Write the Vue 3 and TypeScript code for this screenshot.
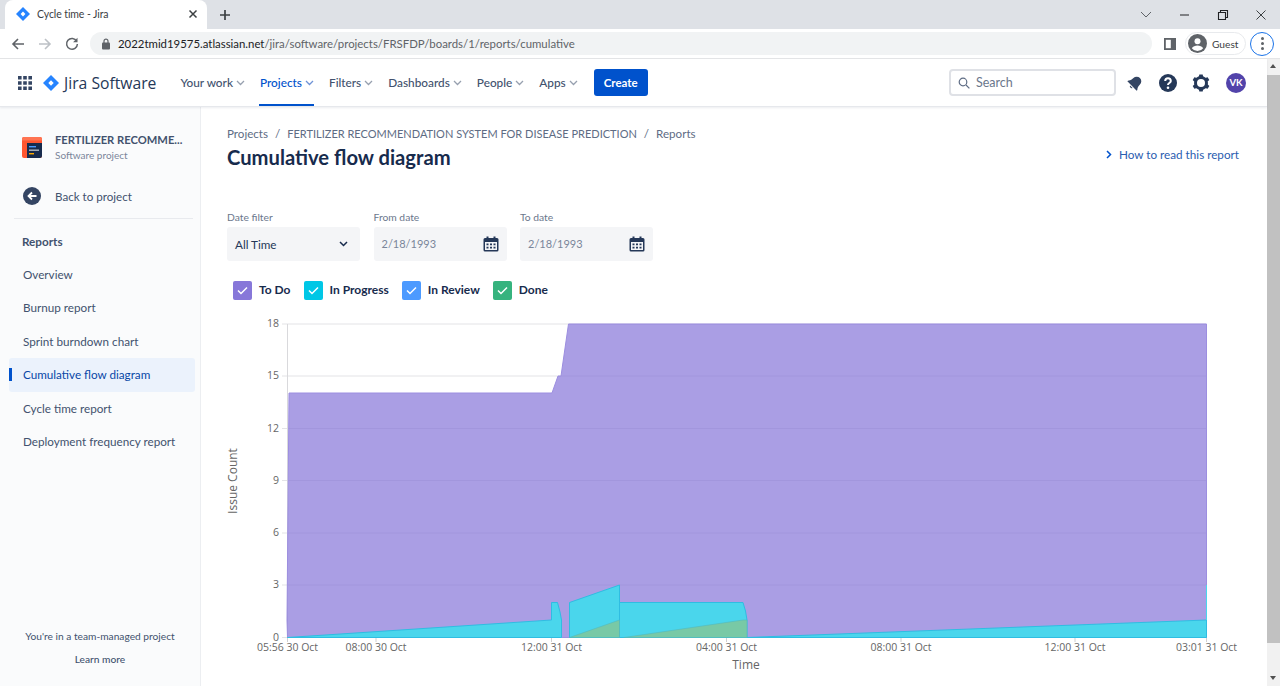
<script setup lang="ts">
const navItems = [
  { label: "Your work", active: false },
  { label: "Projects", active: true },
  { label: "Filters", active: false },
  { label: "Dashboards", active: false },
  { label: "People", active: false },
  { label: "Apps", active: false },
];

const reports = [
  { label: "Overview", active: false },
  { label: "Burnup report", active: false },
  { label: "Sprint burndown chart", active: false },
  { label: "Cumulative flow diagram", active: true },
  { label: "Cycle time report", active: false },
  { label: "Deployment frequency report", active: false },
];

const legend = [
  { label: "To Do", color: "#8777d9" },
  { label: "In Progress", color: "#00c7e6" },
  { label: "In Review", color: "#4c9aff" },
  { label: "Done", color: "#36b37e" },
];

const yTicks = [
  { label: "18", y: 324 },
  { label: "15", y: 376 },
  { label: "12", y: 428.5 },
  { label: "9", y: 480.5 },
  { label: "6", y: 533 },
  { label: "3", y: 585 },
  { label: "0", y: 637.5 },
];

const xTicks = [
  { label: "05:56 30 Oct", x: 287.5 },
  { label: "08:00 30 Oct", x: 376 },
  { label: "12:00 31 Oct", x: 551.5 },
  { label: "04:00 31 Oct", x: 726.5 },
  { label: "08:00 31 Oct", x: 901 },
  { label: "12:00 31 Oct", x: 1075 },
  { label: "03:01 31 Oct", x: 1206.5 },
];

const purpleArea =
  "287.5,637.5 287,620 289,393 552,393 558,376 561,376 568.5,324 1206.5,324 1206.5,637.5";
const cyanAreas = [
  "287.5,637.5 551.5,620 551.5,602.5 557.5,602.5 560,612 561.5,620 561.5,637.5",
  "569.5,637.5 569.5,602.5 619.5,585 619.5,637.5",
  "619.5,637.5 619.5,602.5 743,602.5 745.5,611 747,620 747,637.5",
  "747,637.5 1206.5,620 1206.5,637.5",
];
const greenAreas = [
  "569.5,637.5 619.5,620 619.5,637.5",
  "624,637.5 743,620 747,620 747,637.5",
];
</script>

<template>
  <div class="page">
    <div class="tabstrip">
      <div class="tab">
        <svg class="favicon" width="16" height="16" viewBox="0 0 16 16">
          <path d="M8 1l7 7-7 7-7-7z" fill="#2684ff" />
          <path d="M8 5.6L10.400 8 8 10.400 5.600 8z" fill="#fff" />
        </svg>
        <span class="tab-title">Cycle time - Jira</span>
        <svg class="tab-close" width="10" height="10" viewBox="0 0 10 10">
          <path d="M1.500 1.500l7 7M8.500 1.500l-7 7" stroke="#3c4043" stroke-width="1.500" />
        </svg>
      </div>
      <svg class="new-tab" width="12" height="12" viewBox="0 0 12 12">
        <path d="M6 1v10M1 6h10" stroke="#3c4043" stroke-width="1.700" />
      </svg>
      <div class="window-controls">
        <svg width="14" height="10" viewBox="0 0 14 10">
          <path d="M2 2l5 5 5-5" fill="none" stroke="#5f6368" stroke-width="1" />
        </svg>
        <svg width="12" height="10" viewBox="0 0 12 10">
          <path d="M1 5h9" stroke="#202124" stroke-width="1" />
        </svg>
        <svg width="12" height="12" viewBox="0 0 12 12">
          <path d="M1.500 3.500h7v7h-7zM3.500 3.500v-2h7v7h-2" fill="none" stroke="#202124" stroke-width="1.100" />
        </svg>
        <svg width="12" height="12" viewBox="0 0 12 12">
          <path d="M1.500 1.500l9 9M10.500 1.500l-9 9" stroke="#3c4043" stroke-width="1" />
        </svg>
      </div>
    </div>

    <div class="toolbar">
      <svg class="tool-back" width="14" height="14" viewBox="0 0 14 14">
        <path d="M13 7H2M7 2L2 7l5 5" fill="none" stroke="#5f6368" stroke-width="1.600" />
      </svg>
      <svg class="tool-forward" width="14" height="14" viewBox="0 0 14 14">
        <path d="M1 7h11M7 2l5 5-5 5" fill="none" stroke="#bdc1c6" stroke-width="1.600" />
      </svg>
      <svg class="tool-reload" width="14" height="14" viewBox="0 0 14 14">
        <path d="M11.700 4.200A5.400 5.400 0 1 0 12.400 7" fill="none" stroke="#5f6368" stroke-width="1.500" />
        <path d="M12.500 0.800v4.400H8.100z" fill="#5f6368" />
      </svg>
      <div class="address">
        <svg width="10" height="12" viewBox="0 0 10 12">
          <rect x="1" y="4.500" width="8" height="7" rx="1" fill="#5f6368" />
          <path d="M3 5V3.200a2 2 0 0 1 4 0V5" fill="none" stroke="#5f6368" stroke-width="1.200" />
        </svg>
        <span class="url"><b>2022tmid19575.atlassian.net</b>/jira/software/projects/FRSFDP/boards/1/reports/cumulative</span>
      </div>
      <svg class="side-panel" width="12" height="12" viewBox="0 0 12 12">
        <path d="M0 0h12v12H0z" fill="#5f6368" />
        <path d="M1.800 1.800h5v8.400h-5z" fill="#fff" />
      </svg>
      <div class="guest">
        <svg width="19" height="19" viewBox="0 0 19 19">
          <circle cx="9.500" cy="9.500" r="9.500" fill="#5f6368" />
          <circle cx="9.500" cy="7.300" r="3" fill="#fff" />
          <path d="M3.800 14.200c1.200-2 3.400-2.800 5.700-2.800s4.500.8 5.700 2.800a7.200 7.200 0 0 1-11.400 0z" fill="#fff" />
        </svg>
        <span>Guest</span>
      </div>
      <div class="menu-ring">
        <i></i><i></i><i></i>
      </div>
    </div>

    <div class="app-row">
      <div class="app">
        <header class="topnav">
          <svg class="apps-grid" width="14" height="14" viewBox="0 0 14 14">
            <path
              fill="#344563"
              d="M0 0h3.600v3.600H0zM5.200 0h3.600v3.600H5.200zM10.400 0H14v3.600h-3.600zM0 5.200h3.600v3.600H0zM5.200 5.200h3.600v3.600H5.200zM10.400 5.200H14v3.600h-3.600zM0 10.400h3.600V14H0zM5.200 10.400h3.600V14H5.200zM10.400 10.400H14V14h-3.600z"
            />
          </svg>
          <svg class="logo-mark" width="16" height="16" viewBox="0 0 16 16">
            <path d="M8 0l8 8-8 8-8-8z" fill="#2684ff" />
            <path d="M8 5.300L10.700 8 8 10.700 5.300 8z" fill="#fff" />
          </svg>
          <span class="logo-text">Jira Software</span>
          <nav class="nav-items">
            <div v-for="item in navItems" :key="item.label" class="nav-item" :class="{ active: item.active }">
              <span>{{ item.label }}</span>
              <svg width="9" height="6" viewBox="0 0 9 6">
                <path d="M1 1l3.500 3.500L8 1" fill="none" stroke="currentColor" stroke-width="1.300" />
              </svg>
            </div>
          </nav>
          <button class="create">Create</button>
          <div class="search">
            <svg width="12" height="12" viewBox="0 0 12 12">
              <circle cx="5" cy="5" r="3.800" fill="none" stroke="#5e6c84" stroke-width="1.200" />
              <path d="M8 8l3.400 3.400" stroke="#5e6c84" stroke-width="1.200" />
            </svg>
            <span>Search</span>
          </div>
          <svg class="top-icon bell" width="16" height="16" viewBox="0 0 16 16">
            <g transform="rotate(45 8 8)">
              <path d="M8 1a4.600 4.600 0 0 0-4.600 4.600c0 3.600-1.400 5-2 5.700v.9h13.200v-.9c-.6-.7-2-2.100-2-5.700A4.600 4.600 0 0 0 8 1z" fill="#344563" />
              <path d="M6.200 13.200a1.900 1.900 0 0 0 3.600 0z" fill="#344563" />
            </g>
          </svg>
          <svg class="top-icon help" width="18" height="18" viewBox="0 0 18 18">
            <circle cx="9" cy="9" r="9" fill="#253858" />
            <path d="M6.200 7a2.800 2.800 0 0 1 5.600 0c0 1.900-2.800 2.100-2.800 3.900" fill="none" stroke="#fff" stroke-width="2" />
            <circle cx="9" cy="13.700" r="1.300" fill="#fff" />
          </svg>
          <svg class="top-icon gear" width="18" height="18" viewBox="0 0 18 18">
            <circle cx="9" cy="9" r="5.500" fill="none" stroke="#253858" stroke-width="3" />
            <path
              d="M7.300 0.500h3.400l.5 2.600H6.800zM7.300 17.500h3.400l.5-2.600H6.800zM0.700 6.100l1.700-2.900 2.500.9-2.200 3.800zM17.300 11.900l-1.700 2.900-2.500-.9 2.200-3.800zM2.400 14.800L.7 11.900l2-1.700 2.200 3.800zM15.600 3.200l1.700 2.900-2 1.700-2.200-3.800z"
              fill="#253858"
            />
          </svg>
          <div class="avatar">VK</div>
        </header>

        <div class="content-row">
          <aside class="sidebar">
            <div class="project">
              <svg width="20" height="21" viewBox="0 0 20 21">
                <rect width="20" height="21" rx="2" fill="#ff5630" />
                <path d="M0 3.500h20V2a2 2 0 0 0-2-2H2a2 2 0 0 0-2 2z" fill="#ff7452" />
                <path d="M5 6h15v13a2 2 0 0 1-2 2H5z" fill="#172b4d" />
                <path d="M7 9h7v1.400H7z" fill="#4c9aff" />
                <path d="M7 12.500h10v1.400H7z" fill="#b3bac5" />
                <path d="M7 16h5v1.400H7z" fill="#ffab00" />
              </svg>
              <div class="project-text">
                <div class="project-name">FERTILIZER RECOMME...</div>
                <div class="project-type">Software project</div>
              </div>
            </div>
            <div class="back">
              <svg width="18" height="18" viewBox="0 0 18 18">
                <circle cx="9" cy="9" r="9" fill="#344563" />
                <path d="M13.500 9H6M9 5.500L5.500 9 9 12.500" fill="none" stroke="#fff" stroke-width="1.800" />
              </svg>
              <span>Back to project</span>
            </div>
            <div class="side-heading">Reports</div>
            <ul class="report-list">
              <li v-for="report in reports" :key="report.label" :class="{ active: report.active }">
                {{ report.label }}
              </li>
            </ul>
            <div class="side-foot">
              <div>You're in a team-managed project</div>
              <div class="learn">Learn more</div>
            </div>
          </aside>

          <main class="main">
            <div class="crumbs">
              <span>Projects</span><i>/</i><span class="crumb-caps">FERTILIZER RECOMMENDATION SYSTEM FOR DISEASE PREDICTION</span><i>/</i><span>Reports</span>
            </div>
            <div class="title-row">
              <h1>Cumulative flow diagram</h1>
              <a class="how-to">
                <svg width="6" height="9" viewBox="0 0 6 9">
                  <path d="M1 1l3.500 3.500L1 8" fill="none" stroke="#0052cc" stroke-width="1.500" />
                </svg>
                How to read this report
              </a>
            </div>

            <div class="filters">
              <div class="field">
                <label>Date filter</label>
                <div class="box select">
                  <span>All Time</span>
                  <svg width="9" height="6" viewBox="0 0 9 6">
                    <path d="M1 1l3.500 3.500L8 1" fill="none" stroke="#172b4d" stroke-width="1.500" />
                  </svg>
                </div>
              </div>
              <div v-for="name in ['From date', 'To date']" :key="name" class="field">
                <label>{{ name }}</label>
                <div class="box date">
                  <span>2/18/1993</span>
                  <svg width="16" height="16" viewBox="0 0 16 16">
                    <path
                      fill="#253858"
                      fill-rule="evenodd"
                      d="M2 2h1.500V.5h2V2h5V.5h2V2H14a1.500 1.500 0 0 1 1.500 1.500V14a1.500 1.500 0 0 1-1.500 1.500H2A1.500 1.500 0 0 1 .5 14V3.500A1.500 1.500 0 0 1 2 2zm0 4v8h12V6z"
                    />
                    <path
                      fill="#253858"
                      d="M3.500 7.500h2v1.700h-2zM7 7.500h2v1.700H7zM10.500 7.500h2v1.700h-2zM3.500 10.800h2v1.700h-2zM7 10.800h2v1.700H7zM10.500 10.800h2v1.700h-2z"
                    />
                  </svg>
                </div>
              </div>
            </div>

            <div class="legend">
              <div v-for="entry in legend" :key="entry.label" class="legend-item">
                <span class="check" :style="{ background: entry.color }">
                  <svg width="11" height="9" viewBox="0 0 11 9">
                    <path d="M1 4.500l3 3L10 1.500" fill="none" stroke="#fff" stroke-width="1.500" />
                  </svg>
                </span>
                <span class="legend-label">{{ entry.label }}</span>
              </div>
            </div>

            <svg class="chart" width="1066" height="376" viewBox="201 310 1066 376">
              <g v-for="tick in yTicks" :key="tick.label">
                <line x1="282" :y1="tick.y" x2="1206.500" :y2="tick.y" stroke="#e3e3e6" />
                <text x="279" :y="tick.y + 3" text-anchor="end" class="tick-text">{{ tick.label }}</text>
              </g>
              <line x1="287.500" y1="324" x2="287.500" y2="637.500" stroke="#d9d9dc" />
              <g v-for="tick in xTicks" :key="tick.x">
                <line :x1="tick.x" y1="637.500" :x2="tick.x" y2="642" stroke="#cfcfd2" />
                <text :x="tick.x" y="651" text-anchor="middle" class="tick-text">{{ tick.label }}</text>
              </g>
              <polygon :points="purpleArea" fill="#8777d9" fill-opacity="0.71" stroke="#9c8ee0" stroke-width="1" />
              <polygon v-for="area in cyanAreas" :key="area" :points="area" fill="#4ad6ec" stroke="#2fbde2" stroke-width="1" />
              <polygon v-for="area in greenAreas" :key="area" :points="area" fill="#78c9a6" stroke="#52b8bc" stroke-width="0.600" />
              <line x1="1206.500" y1="585" x2="1206.500" y2="620" stroke="#4ad6ec" />
              <text x="746" y="669" text-anchor="middle" class="axis-text">Time</text>
              <text x="237" y="481" text-anchor="middle" transform="rotate(-90 237 481)" class="axis-text">Issue Count</text>
            </svg>
          </main>
        </div>
      </div>

      <div class="scrollbar">
        <span class="arrow-up"></span>
        <div class="thumb"></div>
        <span class="arrow-down"></span>
      </div>
    </div>
  </div>
</template>

<style scoped>
.page {
  width: 1280px;
  height: 686px;
  overflow: hidden;
  display: flex;
  flex-direction: column;
  font-family: Lato, "Open Sans", sans-serif;
  color: #42526e;
  background: #fff;
}

.tabstrip {
  height: 29px;
  flex: none;
  display: flex;
  align-items: center;
  background: #dee1e6;
}

.tab {
  width: 202px;
  height: 29px;
  margin-left: 5px;
  padding: 0 9px 1px 12px;
  box-sizing: border-box;
  background: #fff;
  border-radius: 8px 8px 0 0;
  display: flex;
  align-items: center;
}

.favicon {
  margin-left: -2px;
}

.tab-title {
  margin-left: 6px;
  font-size: 10.500px;
  letter-spacing: -0.1px;
  color: #3c4043;
}

.tab-close {
  margin-left: auto;
}

.new-tab {
  margin-left: 12px;
}

.window-controls {
  margin-left: auto;
  width: 128px;
  margin-right: 13px;
  display: flex;
  justify-content: space-between;
  align-items: center;
}

.toolbar {
  height: 30px;
  flex: none;
  display: flex;
  align-items: center;
  background: #fff;
  border-bottom: 1px solid #e4e5e7;
  box-sizing: border-box;
}

.tool-back {
  margin-left: 11px;
}

.tool-forward {
  margin-left: 13px;
}

.tool-reload {
  margin-left: 13px;
}

.address {
  width: 1062px;
  height: 23px;
  margin-left: 11px;
  padding-left: 11px;
  box-sizing: border-box;
  background: #f1f3f4;
  border-radius: 12px;
  display: flex;
  align-items: center;
  gap: 7px;
}

.url {
  font-size: 11.400px;
  color: #5f6368;
}

.url b {
  font-weight: 400;
  color: #202124;
}

.side-panel {
  margin-left: 12px;
}

.guest {
  width: 61px;
  height: 23px;
  margin-left: 9px;
  box-sizing: border-box;
  padding-left: 2px;
  border: 1px solid #e8eaed;
  border-radius: 12px;
  display: flex;
  align-items: center;
  gap: 5px;
  font-size: 10.200px;
  color: #3c4043;
}

.menu-ring {
  width: 24px;
  height: 24px;
  margin-left: 4px;
  box-sizing: border-box;
  border: 1.500px solid #1a73e8;
  border-radius: 50%;
  display: flex;
  flex-direction: column;
  align-items: center;
  justify-content: center;
  gap: 2px;
}

.menu-ring i {
  width: 3px;
  height: 3px;
  border-radius: 50%;
  background: #5f6368;
}

.app-row {
  flex: 1;
  min-height: 0;
  display: flex;
}

.app {
  width: 1267px;
  display: flex;
  flex-direction: column;
}

.topnav {
  height: 48px;
  flex: none;
  box-sizing: border-box;
  display: flex;
  align-items: center;
  padding-left: 18px;
  border-bottom: 1px solid #e6e8ec;
  box-shadow: 0 1px 2px rgba(9, 30, 66, 0.08);
  position: relative;
  z-index: 1;
  background: #fff;
}

.logo-mark {
  margin-left: 11px;
}

.logo-text {
  margin-left: 5px;
  font-family: "Open Sans", sans-serif;
  font-size: 15.700px;
  color: #253858;
  font-weight: 500;
}

.nav-items {
  display: flex;
  margin-left: 24px;
  gap: 15px;
  height: 100%;
}

.nav-item {
  position: relative;
  display: flex;
  align-items: center;
  gap: 3px;
  font-size: 11.800px;
  font-weight: 500;
  color: #42526e;
  white-space: nowrap;
}

.nav-item svg {
  color: #97a0af;
}

.nav-item.active {
  color: #0052cc;
}

.nav-item.active svg {
  color: #6f93d6;
}

.nav-item.active::after {
  content: "";
  position: absolute;
  left: -1px;
  right: 0;
  bottom: 0;
  height: 2px;
  background: #0052cc;
}

.create {
  width: 54px;
  height: 27px;
  margin-left: 16px;
  padding: 0;
  border: none;
  border-radius: 3px;
  background: #0052cc;
  color: #fff;
  font-family: inherit;
  font-size: 11.500px;
  font-weight: 700;
}

.search {
  width: 167px;
  height: 27px;
  margin-left: auto;
  box-sizing: border-box;
  padding-left: 7px;
  border: 2px solid #dfe1e6;
  border-radius: 4px;
  display: flex;
  align-items: center;
  gap: 6px;
  font-size: 12.500px;
  color: #6b778c;
}

.bell {
  margin-left: 11px;
}

.help {
  margin-left: 16px;
}

.gear {
  margin-left: 15px;
}

.avatar {
  width: 20px;
  height: 20px;
  margin-left: 16px;
  margin-right: 21px;
  border-radius: 50%;
  background: #5243aa;
  color: #fff;
  font-size: 9.500px;
  font-weight: 700;
  display: flex;
  align-items: center;
  justify-content: center;
}

.content-row {
  flex: 1;
  min-height: 0;
  display: flex;
}

.sidebar {
  width: 201px;
  flex: none;
  box-sizing: border-box;
  padding: 25px 5px 0 9px;
  display: flex;
  flex-direction: column;
  background: #fafbfc;
  border-right: 1px solid #eceef1;
}

.project {
  display: flex;
  align-items: center;
  gap: 13px;
  padding-left: 13px;
}

.project-name {
  font-size: 11.200px;
  line-height: 16px;
  font-weight: 700;
  color: #42526e;
  white-space: nowrap;
}

.project-type {
  font-size: 10px;
  line-height: 14px;
  color: #7a869a;
}

.back {
  margin: 25px 2px 0 5px;
  padding: 0 0 13px 9px;
  border-bottom: 1px solid #e8eaee;
  display: flex;
  align-items: center;
  gap: 14px;
  font-size: 11.600px;
  color: #42526e;
}

.side-heading {
  margin-top: 14px;
  padding-left: 13px;
  font-size: 11.700px;
  line-height: 16px;
  font-weight: 700;
  color: #42526e;
}

.report-list {
  list-style: none;
  margin: 9px 0 0;
  padding: 0;
}

.report-list li {
  position: relative;
  height: 33.400px;
  line-height: 33px;
  padding-left: 14px;
  font-size: 11.700px;
  color: #42526e;
  white-space: nowrap;
}

.report-list li.active {
  background: #ebf2fc;
  border-radius: 3px;
  color: #0747a6;
}

.report-list li.active::before {
  content: "";
  position: absolute;
  left: 0;
  top: 10px;
  width: 3px;
  height: 13px;
  background: #0052cc;
}

.side-foot {
  margin: auto 4px 0 0;
  padding-bottom: 21px;
  text-align: center;
  font-size: 10.200px;
  color: #42526e;
}

.learn {
  margin-top: 11px;
  font-weight: 500;
}

.main {
  flex: 1;
  min-width: 0;
  display: flex;
  flex-direction: column;
}

.crumbs {
  margin: 19px 0 0 26px;
  font-size: 11.600px;
  line-height: 16px;
  color: #5e6c84;
  white-space: nowrap;
}

.crumb-caps {
  font-size: 11px;
}

.crumbs i {
  font-style: normal;
  margin: 0 7px;
}

.title-row {
  margin: 2px 28px 0 26px;
  display: flex;
  justify-content: space-between;
  align-items: center;
}

h1 {
  margin: 0;
  font-size: 20.200px;
  font-weight: 700;
  line-height: 26px;
  color: #172b4d;
}

.how-to {
  display: flex;
  align-items: center;
  gap: 7px;
  padding-bottom: 6px;
  font-size: 11.700px;
  color: #2a5db0;
}

.filters {
  margin: 40px 0 0 26px;
  display: flex;
  gap: 13.500px;
}

.field label {
  display: block;
  margin-bottom: 3px;
  font-size: 10.300px;
  line-height: 14px;
  color: #6b778c;
}

.box {
  width: 133px;
  height: 34px;
  box-sizing: border-box;
  padding: 0 8px 1px;
  background: #f4f5f7;
  border-radius: 3px;
  display: flex;
  align-items: center;
  justify-content: space-between;
  font-size: 11.700px;
}

.select {
  color: #253858;
  padding-right: 12px;
}

.date {
  color: #7a869a;
  font-size: 11px;
}

.legend {
  margin: 19px 0 0 32px;
  display: flex;
  gap: 13px;
  height: 20px;
}

.legend-item {
  display: flex;
  align-items: center;
  gap: 7px;
  font-size: 12px;
  font-weight: 700;
  color: #172b4d;
}

.legend-label {
  padding-bottom: 2px;
}

.check {
  width: 19px;
  height: 19px;
  border-radius: 2px;
  display: flex;
  align-items: center;
  justify-content: center;
}

.chart {
  display: block;
  flex: none;
  margin-top: 10px;
}

.tick-text {
  font-family: "Open Sans", sans-serif;
  font-size: 10.500px;
  fill: #666;
}

.axis-text {
  font-family: "Open Sans", sans-serif;
  font-size: 12px;
  fill: #666;
}

.scrollbar {
  width: 13px;
  flex: none;
  position: relative;
  background: #f1f1f1;
}

.thumb {
  position: absolute;
  left: 0;
  right: 0;
  top: 16px;
  height: 568px;
  background: #c1c1c1;
}

.arrow-up,
.arrow-down {
  position: absolute;
  left: 3px;
  width: 0;
  height: 0;
  border-left: 3.500px solid transparent;
  border-right: 3.500px solid transparent;
}

.arrow-up {
  top: 5px;
  border-bottom: 4px solid #505050;
}

.arrow-down {
  bottom: 6px;
  border-top: 4px solid #505050;
}
</style>

<style>
html,
body {
  margin: 0;
  overflow: hidden;
}
</style>
